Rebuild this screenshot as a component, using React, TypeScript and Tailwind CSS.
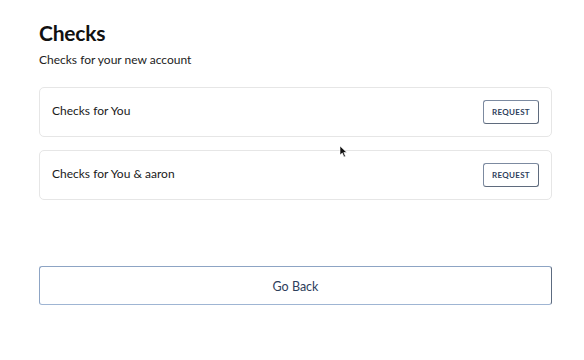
import React from "react";

const options = ["Checks for You", "Checks for You & aaron"];

export default function App() {
  return (
    <div className="w-[584px] h-[360px] bg-white font-['Lato',sans-serif] text-[#111] pl-[39px] pr-[32px] pt-[19px] relative">
      <h1 className="text-[21px] font-bold leading-[28px] tracking-[-0.2px]">Checks</h1>
      <p className="text-[12px] leading-[16px] mt-[5px] text-[#222]">Checks for your new account</p>

      <div className="mt-[19px] flex flex-col gap-[13px]">
        {options.map((label) => (
          <div
            key={label}
            className="h-[50px] rounded-[5px] border border-[#e6e6e6] flex items-center justify-between pl-[12px] pr-[12px]"
          >
            <span className="text-[12px] text-[#1a1a1a] -mt-[3px]">{label}</span>
            <button className="h-[24px] w-[56px] rounded-[3px] border border-[#7c8aa0] border-r-[#5f6b7d] border-b-[#5f6b7d] text-[8px] font-bold tracking-[0.3px] text-[#2d3e5c] flex items-center justify-center">
              REQUEST
            </button>
          </div>
        ))}
      </div>

      <button className="mt-[66px] w-full h-[39px] pt-[3px] rounded-[3px] border border-[#8da4c4] border-r-[#5c6b80] border-b-[#9fb5d3] text-[12.5px] text-[#2d3e5c] flex items-center justify-center">
        Go Back
      </button>

      <svg className="absolute left-[339px] top-[145px]" width="9" height="13" viewBox="0 0 9 13">
        <path d="M1 1 L1 10 L3.3 8 L5 12 L6.5 11.3 L4.8 7.5 L7.8 7.5 Z" fill="#111" stroke="#fff" strokeWidth="0.6" />
      </svg>
    </div>
  );
}
